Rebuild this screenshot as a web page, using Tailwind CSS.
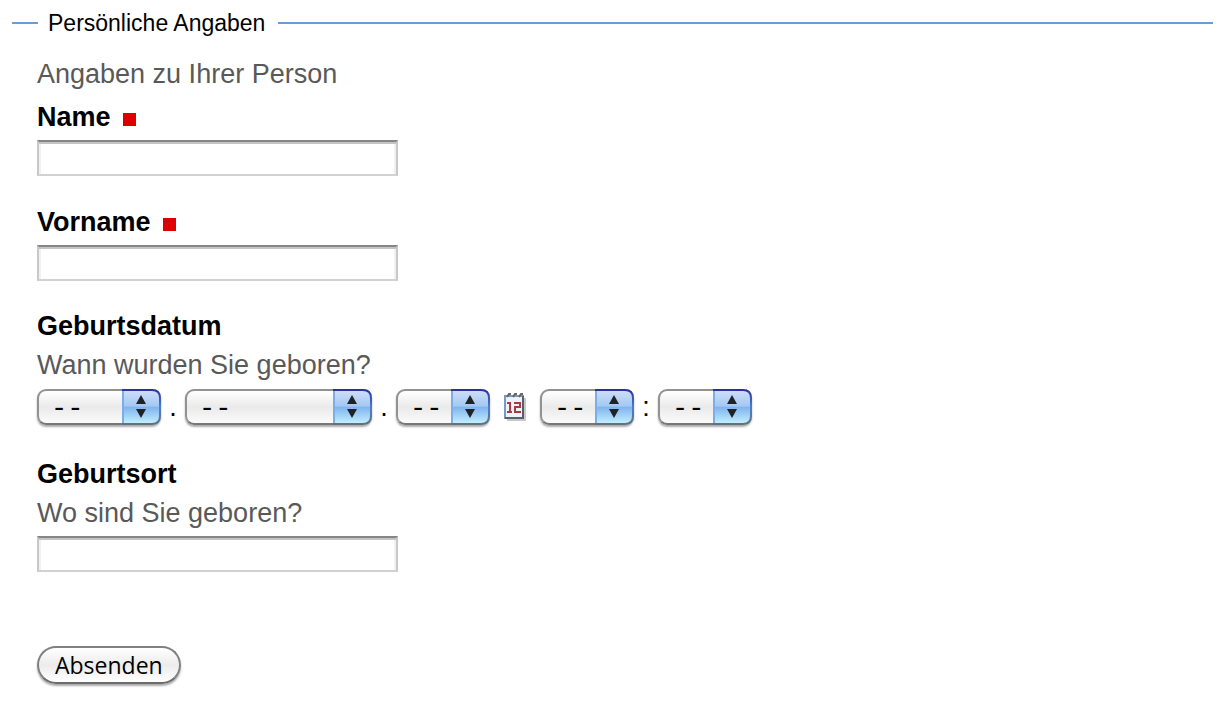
<!DOCTYPE html>
<html lang="de">
<head>
<meta charset="utf-8">
<meta name="viewport" content="width=device-width, initial-scale=1">
<title>Persönliche Angaben</title>
<script src="https://cdn.jsdelivr.net/npm/@tailwindcss/browser@4"></script>
</head>
<body class="bg-white font-['Liberation_Sans',Arial,sans-serif] text-[27px] leading-[39px] text-black">
<svg class="absolute size-0" aria-hidden="true">
  <defs>
    <linearGradient id="aqua" x1="0" y1="0" x2="0" y2="1">
      <stop offset="0" stop-color="#d3e0f8"/>
      <stop offset=".48" stop-color="#a3c8f3"/>
      <stop offset=".5" stop-color="#7fb3ee"/>
      <stop offset="1" stop-color="#c8f6ff"/>
    </linearGradient>
    <linearGradient id="rim" x1="0" y1="0" x2="0" y2="1">
      <stop offset="0" stop-color="#2c2f9c"/>
      <stop offset=".5" stop-color="#4c7fd0"/>
      <stop offset="1" stop-color="#666f7c"/>
    </linearGradient>
    <symbol id="stepper" viewBox="0 0 39 36">
      <path d="M0 0H30Q39 0 39 9V27Q39 36 30 36H0Z" fill="url(#aqua)"/>
      <path d="M1 1V35" stroke="#79aeea" stroke-width="2"/>
      <path d="M0 1H30Q38 1 38 9V27Q38 35 30 35H0" fill="none" stroke="url(#rim)" stroke-width="2"/>
      <path d="M19 6L24 15H14ZM19 29L24 20H14Z" fill="#202326"/>
    </symbol>
  </defs>
</svg>
<form class="pt-2 pr-[6px] pb-5 pl-3">
  <fieldset class="min-w-0 border-t-2 border-[#659fd5] pl-[25px]">
    <legend class="ml-px pr-[13px] pl-[10px] text-[23px] leading-[30px]">Persönliche Angaben</legend>
    <div class="pt-[17px]">
      <p class="mb-1 text-[#595959]">Angaben zu Ihrer Person</p>

      <div class="mb-[27px]">
        <label for="name" class="mb-[3px] flex items-center gap-3 font-bold">Name <span class="mt-[3px] size-[13px] bg-[#dc0000]"></span></label>
        <input id="name" type="text" required class="block h-9 w-[361px] max-w-full border-2 border-[#c8c8c8] border-t-[#858585] border-b-[#d2d2d2] px-2 text-[23px] shadow-[inset_0_2px_0_#c4c4c4,inset_2px_0_0_#f1f1f1,inset_-2px_0_0_#f1f1f1]">
      </div>

      <div class="mb-[26px]">
        <label for="vorname" class="mb-[3px] flex items-center gap-3 font-bold">Vorname <span class="mt-[3px] size-[13px] bg-[#dc0000]"></span></label>
        <input id="vorname" type="text" required class="block h-9 w-[361px] max-w-full border-2 border-[#c8c8c8] border-t-[#858585] border-b-[#d2d2d2] px-2 text-[23px] shadow-[inset_0_2px_0_#c4c4c4,inset_2px_0_0_#f1f1f1,inset_-2px_0_0_#f1f1f1]">
      </div>

      <div class="mb-7">
        <label for="tag" class="block font-bold">Geburtsdatum</label>
        <p class="mb-[3px] text-[#595959]">Wann wurden Sie geboren?</p>
        <div class="flex h-[39px] items-center pb-px">
          <div class="relative h-9 w-[124px]">
            <select id="tag" aria-label="Tag" class="block size-full appearance-none rounded-[9px] border-2 border-[#929292] border-b-[#777777] bg-linear-to-b from-white via-[#eaeaea] to-[#fbfbfb] pt-1 pl-3 font-['Liberation_Mono',monospace] text-[27px] leading-7 shadow-[0_2px_2px_#00000055]"><option>--</option></select>
            <svg class="pointer-events-none absolute top-0 right-0 h-9 w-[39px]"><use href="#stepper"/></svg>
          </div>
          <span class="w-6 text-center">.</span>
          <div class="relative h-9 w-[187px]">
            <select aria-label="Monat" class="block size-full appearance-none rounded-[9px] border-2 border-[#929292] border-b-[#777777] bg-linear-to-b from-white via-[#eaeaea] to-[#fbfbfb] pt-1 pl-3 font-['Liberation_Mono',monospace] text-[27px] leading-7 shadow-[0_2px_2px_#00000055]"><option>--</option></select>
            <svg class="pointer-events-none absolute top-0 right-0 h-9 w-[39px]"><use href="#stepper"/></svg>
          </div>
          <span class="w-6 text-center">.</span>
          <div class="relative h-9 w-[94px]">
            <select aria-label="Jahr" class="block size-full appearance-none rounded-[9px] border-2 border-[#929292] border-b-[#777777] bg-linear-to-b from-white via-[#eaeaea] to-[#fbfbfb] pt-1 pl-3 font-['Liberation_Mono',monospace] text-[27px] leading-7 shadow-[0_2px_2px_#00000055]"><option>--</option></select>
            <svg class="pointer-events-none absolute top-0 right-0 h-9 w-[39px]"><use href="#stepper"/></svg>
          </div>
          <button type="button" aria-label="Kalender" class="mr-[13px] ml-[13px] h-[30px] w-6">
            <svg class="h-[30px] w-6" viewBox="0 0 24 30">
              <path d="M4 6H23V29H4Z" fill="#c9c9c9"/>
              <path d="M2 4H20V26H2Z" fill="#eef3fa" stroke="#7799c6" stroke-width="2"/>
              <path d="M20 4V26H2" fill="none" stroke="#59606c" stroke-width="2"/>
              <path d="M4 5L6 2H8M10 5L12 2H14M16 5L18 2H20" fill="none" stroke="#666" stroke-width="2"/>
              <path d="M4 11H7V20M4 20H9M11 11H17V15H12V20H18" fill="none" stroke="#a83a40" stroke-width="2"/>
            </svg>
          </button>
          <div class="relative h-9 w-[94px]">
            <select aria-label="Stunde" class="block size-full appearance-none rounded-[9px] border-2 border-[#929292] border-b-[#777777] bg-linear-to-b from-white via-[#eaeaea] to-[#fbfbfb] pt-1 pl-3 font-['Liberation_Mono',monospace] text-[27px] leading-7 shadow-[0_2px_2px_#00000055]"><option>--</option></select>
            <svg class="pointer-events-none absolute top-0 right-0 h-9 w-[39px]"><use href="#stepper"/></svg>
          </div>
          <span class="w-6 text-center">:</span>
          <div class="relative h-9 w-[94px]">
            <select aria-label="Minute" class="block size-full appearance-none rounded-[9px] border-2 border-[#929292] border-b-[#777777] bg-linear-to-b from-white via-[#eaeaea] to-[#fbfbfb] pt-1 pl-3 font-['Liberation_Mono',monospace] text-[27px] leading-7 shadow-[0_2px_2px_#00000055]"><option>--</option></select>
            <svg class="pointer-events-none absolute top-0 right-0 h-9 w-[39px]"><use href="#stepper"/></svg>
          </div>
        </div>
      </div>

      <div>
        <label for="ort" class="block font-bold">Geburtsort</label>
        <p id="ort-hilfe" class="mb-[3px] text-[#595959]">Wo sind Sie geboren?</p>
        <input id="ort" type="text" aria-describedby="ort-hilfe" class="block h-9 w-[361px] max-w-full border-2 border-[#c8c8c8] border-t-[#858585] border-b-[#d2d2d2] px-2 text-[23px] shadow-[inset_0_2px_0_#c4c4c4,inset_2px_0_0_#f1f1f1,inset_-2px_0_0_#f1f1f1]">
      </div>
    </div>
  </fieldset>
  <button type="submit" class="mt-[74px] ml-[25px] block h-[38px] rounded-full border-2 border-[#808080] border-b-[#6c6c6c] bg-linear-to-b from-white via-[#ececec] to-white px-4 font-['Open_Sans','Noto_Sans',sans-serif] text-[23px] leading-[34px] shadow-[0_2px_2px_#00000055]">Absenden</button>
</form>
</body>
</html>
